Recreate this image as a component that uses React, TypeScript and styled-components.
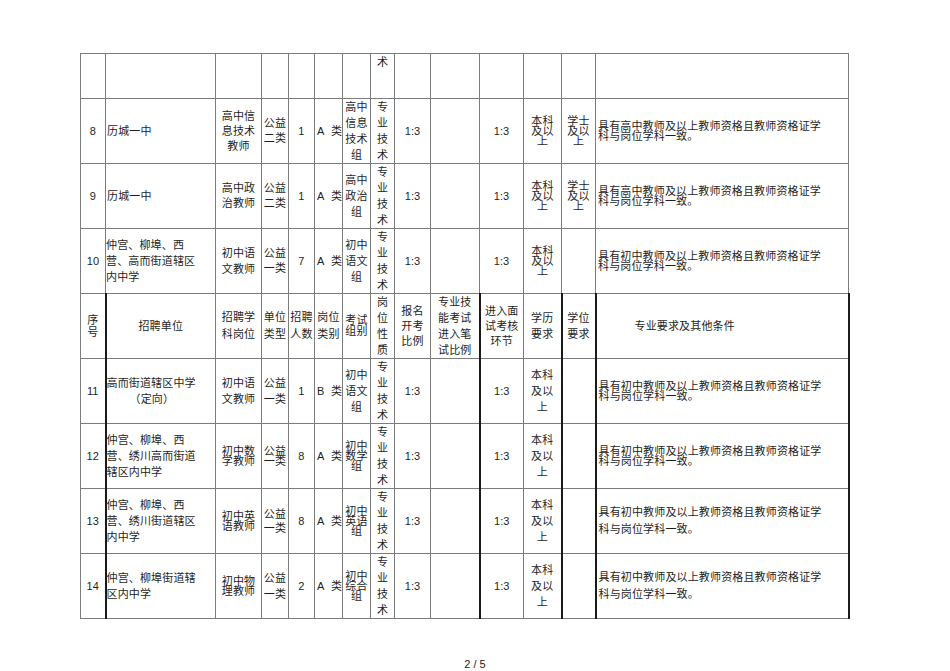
import React from "react";
import styled, { createGlobalStyle } from "styled-components";

const GlobalStyle = createGlobalStyle`
  html, body { margin: 0; padding: 0; background: #ffffff; }
  body { font-family: "Liberation Sans", "Noto Sans CJK SC", sans-serif; color: #1e1e1e; }
`;

const Page = styled.div`
  width: 950px;
  height: 671px;
  display: flex;
  flex-direction: column;
  align-items: flex-start;
  overflow: hidden;
`;

const Sheet = styled.table`
  margin: 53px 0 0 80px;
  border-collapse: collapse;
  table-layout: fixed;
  width: 768px;
`;

const Row = styled.tr<{ $h: number }>`
  height: ${(p) => p.$h}px;
`;

type Align = "left" | "center";

const Cell = styled.td<{
  $align: Align;
  $lh: number;
  $pl: number;
  $top: boolean;
  $darkL: boolean;
  $darkR: boolean;
}>`
  border: 1px solid #7c7c7c;
  ${(p) => (p.$darkL ? "border-left: 2px solid #1a1a1a;" : "")}
  ${(p) => (p.$darkR ? "border-right: 2px solid #1a1a1a;" : "")}
  padding: ${(p) => (p.$top ? "2px" : "0")} 0 0 ${(p) => p.$pl}px;
  text-align: ${(p) => p.$align};
  vertical-align: ${(p) => (p.$top ? "top" : "middle")};
  font-size: 11px;
  letter-spacing: 0.15px;
  line-height: ${(p) => p.$lh}px;
  white-space: nowrap;
  overflow: visible;
`;

const Indent = styled.span<{ $w: number }>`
  display: block;
  padding-left: ${(p) => p.$w}px;
`;

const Footer = styled.div`
  width: 100%;
  margin-top: 38px;
  text-align: center;
  font-size: 11px;
  line-height: 14px;
  color: #222;
`;

type C = { t?: React.ReactNode; a?: Align; lh?: number; pl?: number; top?: boolean };

const cols = [25, 110, 46, 27, 26, 28, 28, 24, 36, 49, 44, 38, 34, 253];
const heights = [45, 65, 64, 65, 65, 65, 64, 65, 63];

const L = (lines: string[]) =>
  lines.map((l, i) => (
    <React.Fragment key={i}>
      {i > 0 && <br />}
      {l}
    </React.Fragment>
  ));

const zy: C = { t: L(["专", "业", "技", "术"]), lh: 16 };
const r13: C = { t: "1:3" };
const blank: C = {};
const bk10: C = { t: L(["本科", "及以", "上"]), lh: 10 };
const bk16: C = { t: L(["本科", "及以", "上"]), lh: 16 };
const xs10: C = { t: L(["学士", "及以", "上"]), lh: 10 };
const req = (level: string, lh: number): C => ({
  t: L([`具有${level}教师及以上教师资格且教师资格证学`, "科与岗位学科一致。"]),
  a: "left",
  lh,
  pl: 2,
});
const num = (n: string): C => ({ t: n });
const cls = (c: string): C => ({ t: `${c}\u00a0\u00a0类`, a: "left", pl: 2 });

const rows: C[][] = [
  [blank, blank, blank, blank, blank, blank, blank, { t: "术", top: true, lh: 12 }, blank, blank, blank, blank, blank, blank],
  [
    num("8"),
    { t: "历城一中", a: "left", pl: 1 },
    { t: L(["高中信", "息技术", "教师"]), lh: 15 },
    { t: L(["公益", "二类"]), lh: 15 },
    num("1"),
    cls("A"),
    { t: L(["高中", "信息", "技术", "组"]), lh: 16 },
    zy, r13, blank, r13, bk10, xs10, req("高中", 10),
  ],
  [
    num("9"),
    { t: "历城一中", a: "left", pl: 1 },
    { t: L(["高中政", "治教师"]), lh: 15 },
    { t: L(["公益", "二类"]), lh: 15 },
    num("1"),
    cls("A"),
    { t: L(["高中", "政治", "组"]), lh: 16 },
    zy, r13, blank, r13, bk10, xs10, req("高中", 10),
  ],
  [
    num("10"),
    { t: L(["仲宫、柳埠、西", "营、高而街道辖区", "内中学"]), a: "left", lh: 16 },
    { t: L(["初中语", "文教师"]), lh: 16 },
    { t: L(["公益", "一类"]), lh: 15 },
    num("7"),
    cls("A"),
    { t: L(["初中", "语文", "组"]), lh: 16 },
    zy, r13, blank, r13, bk10, blank, req("初中", 10),
  ],
  [
    { t: L(["序", "号"]), lh: 12 },
    { t: "招聘单位" },
    { t: L(["招聘学", "科岗位"]), lh: 17 },
    { t: L(["单位", "类型"]), lh: 17 },
    { t: L(["招聘", "人数"]), lh: 17 },
    { t: L(["岗位", "类别"]), lh: 17 },
    { t: L(["考试", "组别"]), lh: 11 },
    { t: L(["岗", "位", "性", "质"]), lh: 16 },
    { t: L(["报名", "开考", "比例"]), lh: 15 },
    { t: L(["专业技", "能考试", "进入笔", "试比例"]), lh: 16 },
    { t: L(["进入面", "试考核", "环节"]), lh: 15 },
    { t: L(["学历", "要求"]), lh: 16 },
    { t: L(["学位", "要求"]), lh: 16 },
    { t: "专业要求及其他条件", a: "left", pl: 38 },
  ],
  [
    num("11"),
    {
      t: (
        <>
          高而街道辖区中学
          <Indent $w={23}>（定向）</Indent>
        </>
      ),
      a: "left",
      lh: 16,
    },
    { t: L(["初中语", "文教师"]), lh: 16 },
    { t: L(["公益", "一类"]), lh: 16 },
    num("1"),
    cls("B"),
    { t: L(["初中", "语文", "组"]), lh: 16 },
    zy, r13, blank, r13, bk16, blank, req("初中", 10),
  ],
  [
    num("12"),
    { t: L(["仲宫、柳埠、西", "营、绣川高而街道", "辖区内中学"]), a: "left", lh: 16 },
    { t: L(["初中数", "学教师"]), lh: 10 },
    { t: L(["公益", "一类"]), lh: 10 },
    num("8"),
    cls("A"),
    { t: L(["初中", "数学", "组"]), lh: 10 },
    zy, r13, blank, r13, bk16, blank, req("初中", 10),
  ],
  [
    num("13"),
    { t: L(["仲宫、柳埠、西", "营、绣川街道辖区", "内中学"]), a: "left", lh: 16 },
    { t: L(["初中英", "语教师"]), lh: 10 },
    { t: L(["公益", "一类"]), lh: 14 },
    num("8"),
    cls("A"),
    { t: L(["初中", "英语", "组"]), lh: 10 },
    zy, r13, blank, r13, bk16, blank, req("初中", 17),
  ],
  [
    num("14"),
    { t: L(["仲宫、柳埠街道辖", "区内中学"]), a: "left", lh: 16 },
    { t: L(["初中物", "理教师"]), lh: 10 },
    { t: L(["公益", "一类"]), lh: 16 },
    num("2"),
    cls("A"),
    { t: L(["初中", "综合", "组"]), lh: 10 },
    zy, r13, blank, r13, bk16, blank, req("初中", 17),
  ],
];

const darkLeftCols = new Set([1, 10, 12, 13]);

export default function App() {
  return (
    <Page>
      <GlobalStyle />
      <Sheet>
        <colgroup>
          {cols.map((w, i) => (
            <col key={i} style={{ width: w }} />
          ))}
        </colgroup>
        <tbody>
          {rows.map((r, ri) => (
            <Row key={ri} $h={heights[ri]}>
              {r.map((c, ci) => (
                <Cell
                  key={ci}
                  $align={c.a ?? "center"}
                  $lh={c.lh ?? 14}
                  $pl={c.pl ?? 0}
                  $top={!!c.top}
                  $darkL={ri >= 4 && darkLeftCols.has(ci)}
                  $darkR={ri >= 4 && ci === 13}
                >
                  {c.t}
                </Cell>
              ))}
            </Row>
          ))}
        </tbody>
      </Sheet>
      <Footer>2 / 5</Footer>
    </Page>
  );
}
